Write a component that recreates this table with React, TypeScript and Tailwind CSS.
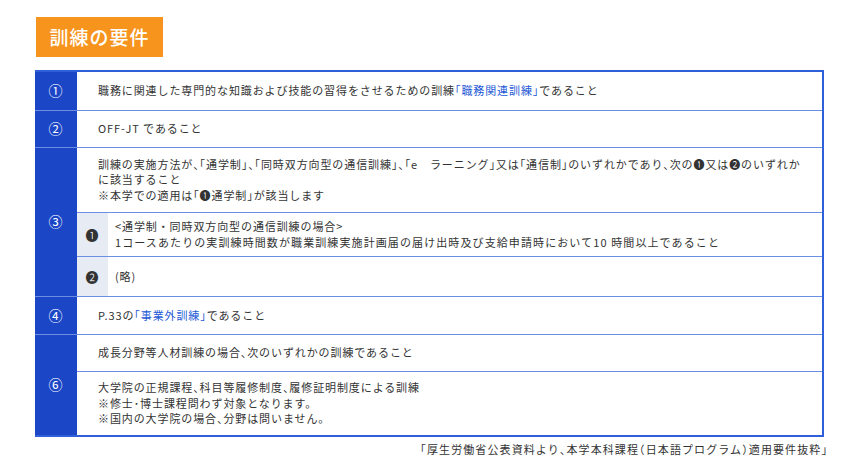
import type { ReactNode } from "react";

const jp = "font-['Noto_Sans_CJK_JP','Noto_Sans',sans-serif]";

// half-width brackets and commas, as the source type setting does
function t(s: string): ReactNode[] {
  return s.split(/([「」、（）])/).map((part, i) =>
    /^[「」、（）]$/.test(part) ? (
      <span key={i} className="[font-feature-settings:'halt']">
        {part}
      </span>
    ) : (
      part
    ),
  );
}

function NumCell({ label }: { label: string }) {
  return (
    <div className="flex w-[42px] shrink-0 items-center justify-center bg-[#1b46c6] text-[14px] text-white">
      {label}
    </div>
  );
}

function Link({ children }: { children: string }) {
  return <span className="text-[#2358d6]">{t(children)}</span>;
}

export default function App() {
  return (
    <div className={`h-[468px] w-[860px] bg-white ${jp} text-[11px] leading-[15.5px] tracking-[0.9px] text-[#333]`}>
      <div className="pl-[36px] pt-[17px]">
        <div className="flex h-[40px] w-[127px] items-center justify-center bg-[#f7941d] text-[19px] font-medium tracking-[1px] text-white">
          訓練の要件
        </div>
      </div>

      <div className="ml-[35px] mt-[13px] w-[789px] border-2 border-l-0 border-[#2f60da]">
        {/* ① */}
        <div className="flex h-[38px]">
          <NumCell label="①" />
          <div className="flex flex-1 items-center pl-[21px]">
            職務に関連した専門的な知識および技能の習得をさせるための訓練<Link>「職務関連訓練」</Link>であること
          </div>
        </div>

        {/* ② */}
        <div className="flex h-[37px] border-t border-[#6d8fe3]">
          <NumCell label="②" />
          <div className="flex flex-1 items-center pl-[21px]">OFF-JT であること</div>
        </div>

        {/* ③ */}
        <div className="flex border-t border-[#6d8fe3]">
          <NumCell label="③" />
          <div className="flex flex-1 flex-col">
            <div className="flex h-[64px] flex-col justify-center pl-[21px]">
              <p className="whitespace-nowrap">
                {t("訓練の実施方法が、「通学制」、「同時双方向型の通信訓練」、「e　ラーニング」又は「通信制」のいずれかであり、次の❶又は❷のいずれか")}
              </p>
              <p>に該当すること</p>
              <p>{t("※本学での適用は「❶通学制」が該当します")}</p>
            </div>
            <div className="flex h-[44px] border-t border-[#6d8fe3]">
              <div className="flex w-[31px] items-center justify-center bg-[#e7ebf4] text-[13px]">❶</div>
              <div className="flex flex-1 flex-col justify-center pl-[7px]">
                <p>&lt;通学制・同時双方向型の通信訓練の場合&gt;</p>
                <p className="tracking-[1.1px]">1コースあたりの実訓練時間数が職業訓練実施計画届の届け出時及び支給申請時において10 時間以上であること</p>
              </div>
            </div>
            <div className="flex h-[40px] border-t border-[#6d8fe3]">
              <div className="flex w-[31px] items-center justify-center bg-[#e7ebf4] text-[13px]">❷</div>
              <div className="flex flex-1 items-center pl-[7px]">(略)</div>
            </div>
          </div>
        </div>

        {/* ④ */}
        <div className="flex h-[38px] border-t border-[#6d8fe3]">
          <NumCell label="④" />
          <div className="flex flex-1 items-center pl-[21px]">
            P.33の<Link>「事業外訓練」</Link>であること
          </div>
        </div>

        {/* ⑥ */}
        <div className="flex border-t border-[#6d8fe3]">
          <NumCell label="⑥" />
          <div className="flex flex-1 flex-col">
            <div className="flex h-[36px] items-center pl-[21px]">{t("成長分野等人材訓練の場合、次のいずれかの訓練であること")}</div>
            <div className="flex h-[64px] flex-col justify-center border-t border-[#6d8fe3] pl-[21px]">
              <p>{t("大学院の正規課程、科目等履修制度、履修証明制度による訓練")}</p>
              <p>※修士･博士課程問わず対象となります。</p>
              <p>{t("※国内の大学院の場合、分野は問いません。")}</p>
            </div>
          </div>
        </div>
      </div>

      <div className="w-[828px] pt-[5px] text-right tracking-[1.1px]">
        {t("「厚生労働省公表資料より、本学本科課程（日本語プログラム）適用要件抜粋」")}
      </div>
    </div>
  );
}
